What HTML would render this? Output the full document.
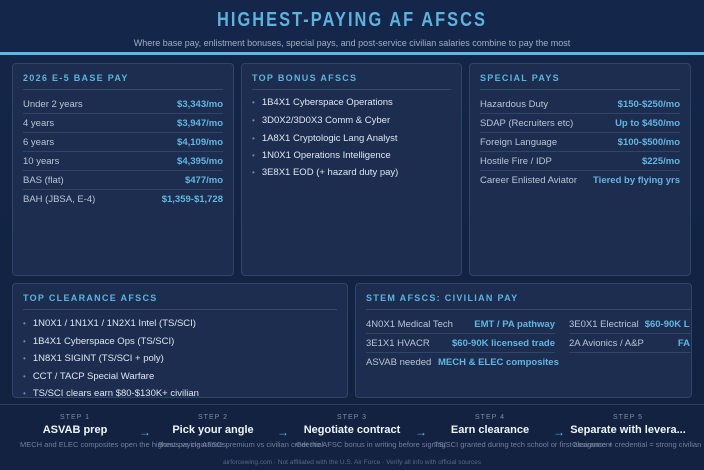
<!DOCTYPE html>
<html><head><meta charset="utf-8"><style>
*{margin:0;padding:0;box-sizing:border-box}
body{width:704px;height:470px;overflow:hidden;background:linear-gradient(180deg,#14264a 0%,#11213f 100%);font-family:"Liberation Sans",sans-serif;color:#d6dfec;position:relative}
.h1{position:absolute;top:9px;left:0;width:704px;text-align:center;font-size:20px;font-weight:bold;letter-spacing:2.5px;color:#5db3de;transform:scaleX(.82)}
.sub{position:absolute;top:38px;left:0;width:704px;text-align:center;font-size:9px;color:#9fb0c6}
.line{position:absolute;top:52px;left:0;width:704px;height:3px;background:#5bb8e0}
.card{position:absolute;background:#1c2d50;border:1px solid #2e4569;border-radius:4px;overflow:hidden}
.t{position:absolute;left:10px;top:9px;font-size:9px;font-weight:bold;letter-spacing:1.3px;color:#5db3de;white-space:nowrap}
.dv{position:absolute;left:10px;right:10px;top:25px;height:1px;background:#34496e}
.row{position:absolute;left:10px;right:10px;height:19px;border-bottom:1px solid #2f4468;font-size:9.5px;line-height:20px;color:#b9c5d6;white-space:nowrap}
.row b{position:absolute;right:0;color:#62b6e0;font-weight:bold}
.row.nb{border-bottom:none}
.li{position:absolute;left:10px;font-size:9.5px;color:#dfe6f0;white-space:nowrap}
.li:before{content:"•";color:#6f8bb0;margin-right:7px;font-size:8px}
.band{position:absolute;top:404px;left:0;width:704px;height:66px;background:#132240;border-top:1px solid #2a3e62}
.st{position:absolute;top:414px;width:140px;text-align:center;white-space:nowrap}
.st i{display:block;font-style:normal;font-size:7px;letter-spacing:1px;color:#7b8ca5}
.st b{display:block;font-size:11px;color:#f0f4fa;margin-top:3px}
.ar{position:absolute;top:425px;font-size:12px;color:#5db3de}
.ds{position:absolute;top:440px;font-size:7.5px;color:#6e809c;white-space:nowrap}
.ft{position:absolute;top:459px;width:704px;text-align:center;font-size:6.5px;color:#56688a}
</style></head><body>
<div class="h1">HIGHEST-PAYING AF AFSCS</div>
<div class="sub">Where base pay, enlistment bonuses, special pays, and post-service civilian salaries combine to pay the most</div>
<div class="line"></div>

<div class="card" style="left:12px;top:63px;width:222px;height:213px">
<div class="t">2026 E-5 BASE PAY</div><div class="dv"></div>
<div class="row" style="top:31px">Under 2 years<b>$3,343/mo</b></div>
<div class="row" style="top:50px">4 years<b>$3,947/mo</b></div>
<div class="row" style="top:69px">6 years<b>$4,109/mo</b></div>
<div class="row" style="top:88px">10 years<b>$4,395/mo</b></div>
<div class="row" style="top:107px">BAS (flat)<b>$477/mo</b></div>
<div class="row nb" style="top:126px">BAH (JBSA, E-4)<b>$1,359-$1,728</b></div>
</div>

<div class="card" style="left:241px;top:63px;width:221px;height:213px">
<div class="t">TOP BONUS AFSCS</div><div class="dv"></div>
<div class="li" style="top:33px">1B4X1 Cyberspace Operations</div>
<div class="li" style="top:51px">3D0X2/3D0X3 Comm &amp; Cyber</div>
<div class="li" style="top:69px">1A8X1 Cryptologic Lang Analyst</div>
<div class="li" style="top:86px">1N0X1 Operations Intelligence</div>
<div class="li" style="top:103px">3E8X1 EOD (+ hazard duty pay)</div>
</div>

<div class="card" style="left:469px;top:63px;width:222px;height:213px">
<div class="t">SPECIAL PAYS</div><div class="dv"></div>
<div class="row" style="top:31px">Hazardous Duty<b>$150-$250/mo</b></div>
<div class="row" style="top:50px">SDAP (Recruiters etc)<b>Up to $450/mo</b></div>
<div class="row" style="top:69px">Foreign Language<b>$100-$500/mo</b></div>
<div class="row" style="top:88px">Hostile Fire / IDP<b>$225/mo</b></div>
<div class="row nb" style="top:107px">Career Enlisted Aviator<b>Tiered by flying yrs</b></div>
</div>

<div class="card" style="left:12px;top:283px;width:336px;height:115px">
<div class="t">TOP CLEARANCE AFSCS</div><div class="dv"></div>
<div class="li" style="top:34px">1N0X1 / 1N1X1 / 1N2X1 Intel (TS/SCI)</div>
<div class="li" style="top:52px">1B4X1 Cyberspace Ops (TS/SCI)</div>
<div class="li" style="top:69px">1N8X1 SIGINT (TS/SCI + poly)</div>
<div class="li" style="top:87px">CCT / TACP Special Warfare</div>
<div class="li" style="top:104px">TS/SCI clears earn $80-$130K+ civilian</div>
</div>

<div class="card" style="left:355px;top:283px;width:337px;height:115px">
<div class="t">STEM AFSCS: CIVILIAN PAY</div><div class="dv" style="right:-20px"></div>
<div class="row" style="top:31px;left:10px;right:auto;width:189px">4N0X1 Medical Tech<b>EMT / PA pathway</b></div>
<div class="row" style="top:50px;left:10px;right:auto;width:189px">3E1X1 HVACR<b>$60-90K licensed trade</b></div>
<div class="row nb" style="top:69px;left:10px;right:auto;width:189px">ASVAB needed <b style="position:static;margin-left:4px">MECH &amp; ELEC composites</b></div>
<div class="row" style="top:31px;left:213px;right:auto;width:189px">3E0X1 Electrical<b style="position:static;margin-left:6px">$60-90K L</b></div>
<div class="row" style="top:50px;left:213px;right:auto;width:189px">2A Avionics / A&amp;P<b style="right:68px">FA</b></div>
</div>

<div class="band"></div>
<div class="st" style="left:5px"><i>STEP 1</i><b>ASVAB prep</b></div>
<div class="st" style="left:143px"><i>STEP 2</i><b>Pick your angle</b></div>
<div class="st" style="left:282px"><i>STEP 3</i><b>Negotiate contract</b></div>
<div class="st" style="left:420px"><i>STEP 4</i><b>Earn clearance</b></div>
<div class="st" style="left:558px"><i>STEP 5</i><b>Separate with levera...</b></div>
<div class="ar" style="left:139px">→</div>
<div class="ar" style="left:277px">→</div>
<div class="ar" style="left:415px">→</div>
<div class="ar" style="left:553px">→</div>
<div class="ds" style="left:20px">MECH and ELEC composites open the highest-paying AFSCs</div>
<div class="ds" style="left:158px">Bonus vs clearance premium vs civilian credential</div>
<div class="ds" style="left:296px">Get the AFSC bonus in writing before signing</div>
<div class="ds" style="left:434px">TS/SCI granted during tech school or first assignment</div>
<div class="ds" style="left:572px">Clearance + credential = strong civilian</div>
<div class="ft">airforcewing.com · Not affiliated with the U.S. Air Force · Verify all info with official sources</div>
</body></html>
